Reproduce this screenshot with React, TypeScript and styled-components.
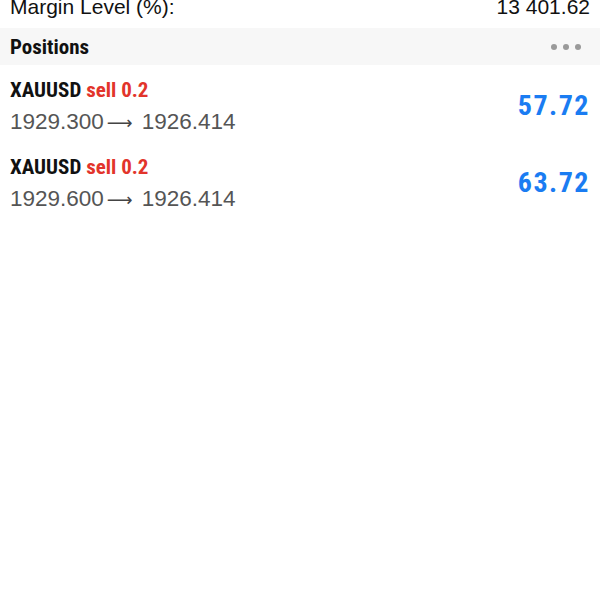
import React from "react";
import styled, { createGlobalStyle } from "styled-components";

const Global = createGlobalStyle`
  html, body { margin: 0; padding: 0; background: #ffffff; }
  body { font-family: "Liberation Sans", Arial, sans-serif; overflow: hidden; }
`;

const condensed = `"Roboto Condensed", "Liberation Sans Narrow", "DejaVu Sans Condensed", sans-serif`;

const Page = styled.div`
  width: 600px;
  height: 600px;
  background: #fff;
  display: flex;
  flex-direction: column;
`;

const SummaryRow = styled.div`
  display: flex;
  justify-content: space-between;
  align-items: baseline;
  margin-top: -5px;
  padding: 0 10px 0 10px;
  height: 33px;
  font-size: 21px;
  line-height: 24px;
  color: #111;
`;

const SectionHeader = styled.div`
  display: flex;
  align-items: center;
  justify-content: space-between;
  height: 37px;
  padding: 0 19px 0 10px;
  background: #f7f7f7;
`;

const SectionTitle = styled.span`
  font-family: ${condensed};
  font-weight: 700;
  font-size: 21px;
  color: #111;
`;

const Dots = styled.div`
  display: flex;
  gap: 6px;
  margin-top: 1px;
`;

const Dot = styled.span`
  width: 6px;
  height: 6px;
  border-radius: 50%;
  background: #9a9a9a;
`;

const PositionRow = styled.div`
  display: flex;
  align-items: center;
  justify-content: space-between;
  padding: 13px 10px 5px 10px;
`;

const Info = styled.div`
  display: flex;
  flex-direction: column;
`;

const Title = styled.div`
  font-family: ${condensed};
  font-weight: 700;
  font-size: 21px;
  line-height: 24px;
  color: #111;
`;

const Side = styled.span`
  color: #e2342b;
`;

const Prices = styled.div`
  margin-top: 6px;
  font-size: 22.5px;
  line-height: 28px;
  color: #555;
`;

const Arrow = styled.span`
  font-family: "DejaVu Sans", sans-serif;
  font-size: 18px;
  margin: 0 9px 0 3px;
  color: #444;
`;

const Profit = styled.div`
  font-family: ${condensed};
  font-weight: 700;
  font-size: 28px;
  letter-spacing: 1.5px;
  color: #1a7cf2;
  margin-bottom: 4px;
`;

const positions = [
  { symbol: "XAUUSD", side: "sell 0.2", open: "1929.300", current: "1926.414", profit: "57.72" },
  { symbol: "XAUUSD", side: "sell 0.2", open: "1929.600", current: "1926.414", profit: "63.72" },
];

export default function App() {
  return (
    <Page>
      <Global />
      <SummaryRow>
        <span>Margin Level (%):</span>
        <span>13 401.62</span>
      </SummaryRow>
      <SectionHeader>
        <SectionTitle>Positions</SectionTitle>
        <Dots>
          <Dot />
          <Dot />
          <Dot />
        </Dots>
      </SectionHeader>
      {positions.map((p, i) => (
        <PositionRow key={i}>
          <Info>
            <Title>
              {p.symbol} <Side>{p.side}</Side>
            </Title>
            <Prices>
              {p.open}
              <Arrow>⟶</Arrow>
              {p.current}
            </Prices>
          </Info>
          <Profit>{p.profit}</Profit>
        </PositionRow>
      ))}
    </Page>
  );
}
